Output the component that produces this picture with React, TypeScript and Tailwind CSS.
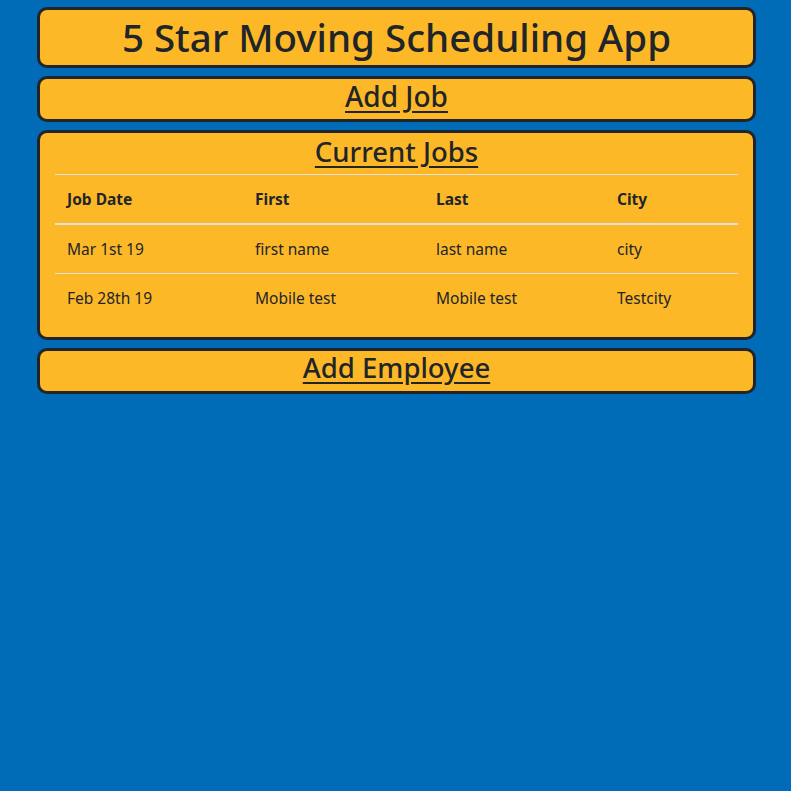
import React from "react"

const jobs = [
  { date: "Mar 1st 19", first: "first name", last: "last name", city: "city" },
  { date: "Feb 28th 19", first: "Mobile test", last: "Mobile test", city: "Testcity" },
]

function Panel({ children, className = "" }: { children: React.ReactNode; className?: string }) {
  return (
    <div className={"rounded-[10px] border-[3px] border-[#212529] bg-[#fdb827] text-[#212529] " + className}>
      {children}
    </div>
  )
}

export default function App() {
  return (
    <div className="min-h-[791px] bg-[#006bb6] pt-[7px] font-['Noto_Sans',sans-serif]">
      <div className="ml-[37px] flex w-[719px] flex-col gap-2">
        <Panel className="flex h-[61px] items-center justify-center">
          <h1 className="text-[38.5px] font-medium leading-none">5 Star Moving Scheduling App</h1>
        </Panel>

        <Panel className="flex h-[46px] items-center justify-center pb-[6px]">
          <a href="#" className="text-[28px] font-medium leading-none underline underline-offset-4">
            Add Job
          </a>
        </Panel>

        <Panel className="px-[15px] pb-[15px]">
          <div className="pb-[3px] text-center">
            <a href="#" className="text-[27.5px] font-medium leading-[38px] underline underline-offset-4">
              Current Jobs
            </a>
          </div>
          <table className="w-full border-collapse text-left text-[15.5px]">
            <thead>
              <tr className="border-t border-b-2 border-[#dee2e6]">
                <th className="w-[188px] px-3 py-3 font-bold leading-6">Job Date</th>
                <th className="w-[181px] px-3 py-3 font-bold leading-6">First</th>
                <th className="w-[181px] px-3 py-3 font-bold leading-6">Last</th>
                <th className="px-3 py-3 font-bold leading-6">City</th>
              </tr>
            </thead>
            <tbody>
              {jobs.map((job, i) => (
                <tr key={i} className={i > 0 ? "border-t border-[#dee2e6]" : ""}>
                  <td className="px-3 py-3 leading-6">{job.date}</td>
                  <td className="px-3 py-3 leading-6">{job.first}</td>
                  <td className="px-3 py-3 leading-6">{job.last}</td>
                  <td className="px-3 py-3 leading-6">{job.city}</td>
                </tr>
              ))}
            </tbody>
          </table>
        </Panel>

        <Panel className="flex h-[46px] items-center justify-center pb-[6px]">
          <a href="#" className="text-[27.5px] font-medium leading-none underline underline-offset-4">
            Add Employee
          </a>
        </Panel>
      </div>
    </div>
  )
}
